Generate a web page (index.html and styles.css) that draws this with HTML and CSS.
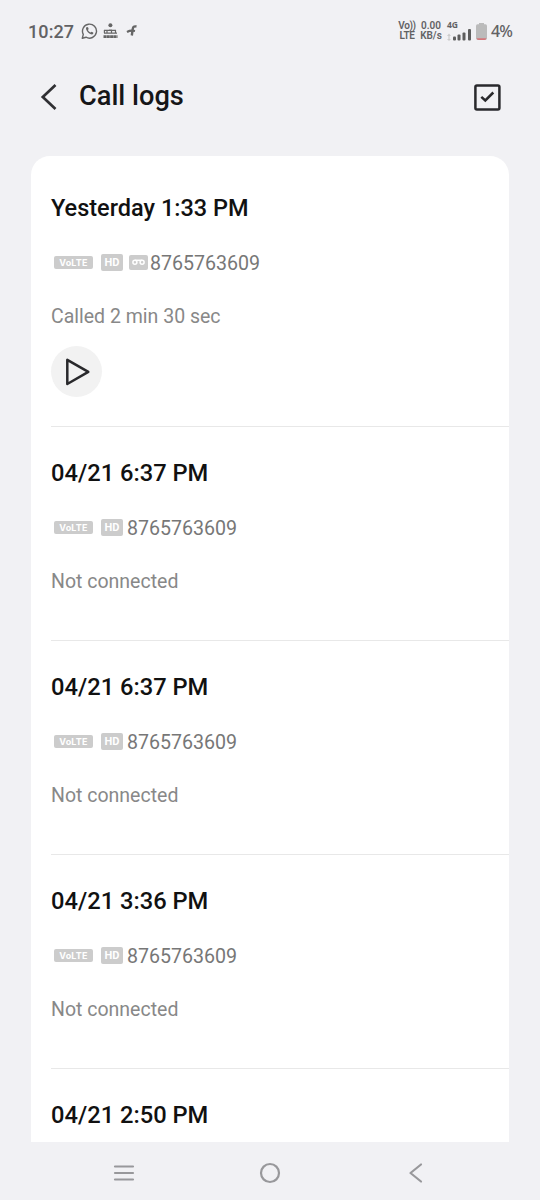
FILE: index.html
```html
<!DOCTYPE html>
<html lang="en">
<head>
<meta charset="utf-8">
<title>Call logs</title>
<link rel="stylesheet" href="styles.css">
</head>
<body>
<div class="screen">
  <div class="status">
    <span class="clock">10:27</span>
    <svg class="notifications" width="60" height="18" viewBox="0 0 60 18" fill="none" stroke="#666" stroke-width="1.4">
      <path d="M1.3 16.2 2.3 12.4A7 7 0 1 1 5 15.2Z" stroke-linejoin="round"/>
      <path d="M5.8 5.1c-.8.5-1 1.5-.5 2.6.9 2.2 2.4 3.7 4.6 4.6 1.1.4 2 0 2.4-.9l-.1-.9-1.7-.8-.9.9C8.300 10 7.500 9.200 6.900 8l.8-.9-.7-1.900Z" fill="#666" stroke="none"/>
      <circle cx="29.400" cy="3.300" r="2" fill="#666" stroke="none"/>
      <path d="M23.400 11V8.500h2.600V11M28 8h2.500v3M32.500 8.500h2V11M23 11.200h13M23 8.300h12" stroke-width="1.200"/>
      <path d="M22.500 14.600h14" stroke-width="2.600" stroke-dasharray="3 .3"/>
      <path d="M55.500 4.500c-3-.6-3.500.7-3.800 2.700L50.800 13.500" stroke-width="2.400"/>
      <path d="M46 10q3.500-2 8-1" stroke-width="2.200"/>
    </svg>
    <span class="mini volte-net"><span>Vo))</span><span>LTE</span></span>
    <span class="mini speed"><span>0.00</span><span>KB/s</span></span>
    <span class="signal"><span class="net">4G</span>
      <svg width="27" height="13" viewBox="0 0 27 13" fill="#5e5e5e"><path d="M2 5.500 0 8h1.400v3H0l2 2 2-2H2.600V8H4z" fill="#ccc"/><rect x="6" y="8.500" width="3" height="4" rx="1"/><rect x="10.500" y="6.500" width="3" height="6" rx="1"/><rect x="15.500" y="4.500" width="3" height="8" rx="1"/><rect x="21" y="1" width="3" height="11.500" rx="1"/></svg>
    </span>
    <svg class="battery" width="11" height="17" viewBox="0 0 11 17"><path d="M3 0h5v1.300h1.500Q11 1.300 11 3v12q0 2-2 2H2q-2 0-2-2V3q0-1.700 1.500-1.700H3z" fill="#bbb"/><path d="M.5 15.200h10q-.3 1.800-2 1.800h-6q-1.700 0-2-1.800z" fill="#d4777b"/></svg>
    <span class="percent">4%</span>
  </div>

  <header class="header">
    <svg class="back" width="17" height="28" viewBox="0 0 17 28" fill="none" stroke="#303033" stroke-width="2.700"><path d="M15.500 2 2.800 14 15.500 26"/></svg>
    <h1 class="heading">Call logs</h1>
    <svg class="select" width="27" height="27" viewBox="0 0 27 27" fill="none" stroke="#29292c" stroke-width="2.500"><rect x="1.400" y="1.400" width="24" height="24" rx="1.500"/><path d="M7.300 12.800 11.300 16.500 19.300 8.500"/></svg>
  </header>

  <main class="card">
    <section class="entry entry-recorded">
      <h2 class="time">Yesterday 1:33 PM</h2>
      <div class="line"><span class="tag volte">VoLTE</span><span class="tag hd">HD</span><svg class="voicemail" width="19" height="15" viewBox="0 0 19 15"><rect width="19" height="15" rx="2" fill="#ccc"/><g fill="none" stroke="#fff" stroke-width="1.500"><circle cx="5.900" cy="7.300" r="2"/><circle cx="13.100" cy="7.300" r="2"/><path d="M5.900 5.300h7.200"/></g></svg><span class="number">8765763609</span></div>
      <p class="result">Called 2 min 30 sec</p>
      <div class="play"><svg width="51" height="51" viewBox="0 0 51 51"><path d="M16.300 13.800V38L37.300 25.800z" fill="none" stroke="#29292c" stroke-width="2.500" stroke-linejoin="round"/></svg></div>
    </section>
    <section class="entry">
      <h2 class="time date">04/21 6:37 PM</h2>
      <div class="line"><span class="tag volte">VoLTE</span><span class="tag hd">HD</span><span class="number spaced">8765763609</span></div>
      <p class="result">Not connected</p>
    </section>
    <section class="entry">
      <h2 class="time date">04/21 6:37 PM</h2>
      <div class="line"><span class="tag volte">VoLTE</span><span class="tag hd">HD</span><span class="number spaced">8765763609</span></div>
      <p class="result">Not connected</p>
    </section>
    <section class="entry">
      <h2 class="time date">04/21 3:36 PM</h2>
      <div class="line"><span class="tag volte">VoLTE</span><span class="tag hd">HD</span><span class="number spaced">8765763609</span></div>
      <p class="result">Not connected</p>
    </section>
    <section class="entry entry-last">
      <h2 class="time date">04/21 2:50 PM</h2>
    </section>
  </main>

  <nav class="navbar">
    <svg width="22" height="22" viewBox="0 0 22 22" stroke="#98989b" stroke-width="2.200" stroke-linecap="round"><path d="M2 4.500h18M2 11h18M2 17.500h18"/></svg>
    <svg width="22" height="22" viewBox="0 0 22 22" fill="none" stroke="#98989b" stroke-width="2.200"><circle cx="11" cy="11" r="9"/></svg>
    <svg width="22" height="22" viewBox="0 0 22 22" fill="none" stroke="#98989b" stroke-width="2.200" stroke-linecap="round" stroke-linejoin="round"><path d="M16 2.500 5.500 11 16 19.500"/></svg>
  </nav>
</div>
</body>
</html>
```
FILE: styles.css
```css
* { box-sizing: border-box; margin: 0; padding: 0; }
body { background: #f1f1f4; font-family: Roboto, sans-serif; }
svg { display: block; flex: none; }
.screen { width: 540px; height: 1200px; display: flex; flex-direction: column; overflow: hidden; }

.status { height: 62px; flex: none; display: flex; align-items: center; padding: 0 27px 0 28px; color: #626264; }
.clock { width: 47px; font-size: 18px; font-weight: 500; letter-spacing: 0.1px; }
.notifications { margin-left: 6px; }
.mini { display: flex; flex-direction: column; align-items: center; font-size: 10px; line-height: 10px; font-weight: 600; white-space: nowrap; }
.volte-net { width: 16px; margin-left: auto; letter-spacing: -0.4px; }
.speed { width: 20px; margin-left: 6px; }
.signal { width: 27px; margin-left: 6px; display: flex; flex-direction: column; }
.net { height: 7px; font-family: "Noto Sans", sans-serif; font-size: 8.500px; line-height: 8px; font-weight: 700; }
.battery { margin-left: 2px; }
.percent { width: 22px; margin-left: 4px; font-family: "Noto Sans", sans-serif; font-size: 16px; font-weight: 500; letter-spacing: -0.8px; }

.header { height: 94px; flex: none; display: flex; padding: 0 39px 0 40px; }
.back { margin-top: 21px; }
.heading { margin: 18px auto 0 22px; font-size: 27.200px; line-height: 32px; font-weight: 500; color: #161618; }
.select { margin-top: 22px; }

.card { height: 986px; flex: none; margin: 0 31px; padding-top: 6px; background: #fff; border-radius: 19px 19px 0 0; overflow: hidden; }
.entry { height: 214px; margin-left: 20px; padding-top: 32px; border-bottom: 1px solid #e8e8e8; }
.entry-recorded { height: 265px; }
.entry-last { border: 0; }
.time { font-size: 23.500px; line-height: 28px; font-weight: 500; color: #111; white-space: nowrap; }
.date { font-size: 23.700px; }
.line { height: 24px; margin-top: 29px; padding-left: 3px; display: flex; }
.tag { flex: none; background: #ccc; color: #fff; text-align: center; font-weight: 700; border-radius: 2px; }
.volte { width: 39px; height: 13px; margin-top: 5px; font-family: Inter, sans-serif; font-size: 9px; line-height: 13px; letter-spacing: 0.2px; }
.hd { width: 22px; height: 17px; margin: 3px 0 0 8px; font-size: 11px; line-height: 17px; }
.voicemail { margin: 4px 0 0 6px; }
.number { margin: 1px 0 0 2px; font-size: 19.600px; line-height: 24px; color: #777; }
.spaced { margin-left: 4px; }
.result { margin-top: 30px; font-size: 19.500px; line-height: 24px; color: #888; white-space: nowrap; }
.play { width: 51px; height: 51px; margin-top: 17px; border-radius: 50%; background: #f2f2f2; }

.navbar { flex: 1; display: flex; justify-content: space-between; align-items: center; padding: 4px 113px 0; }
```
